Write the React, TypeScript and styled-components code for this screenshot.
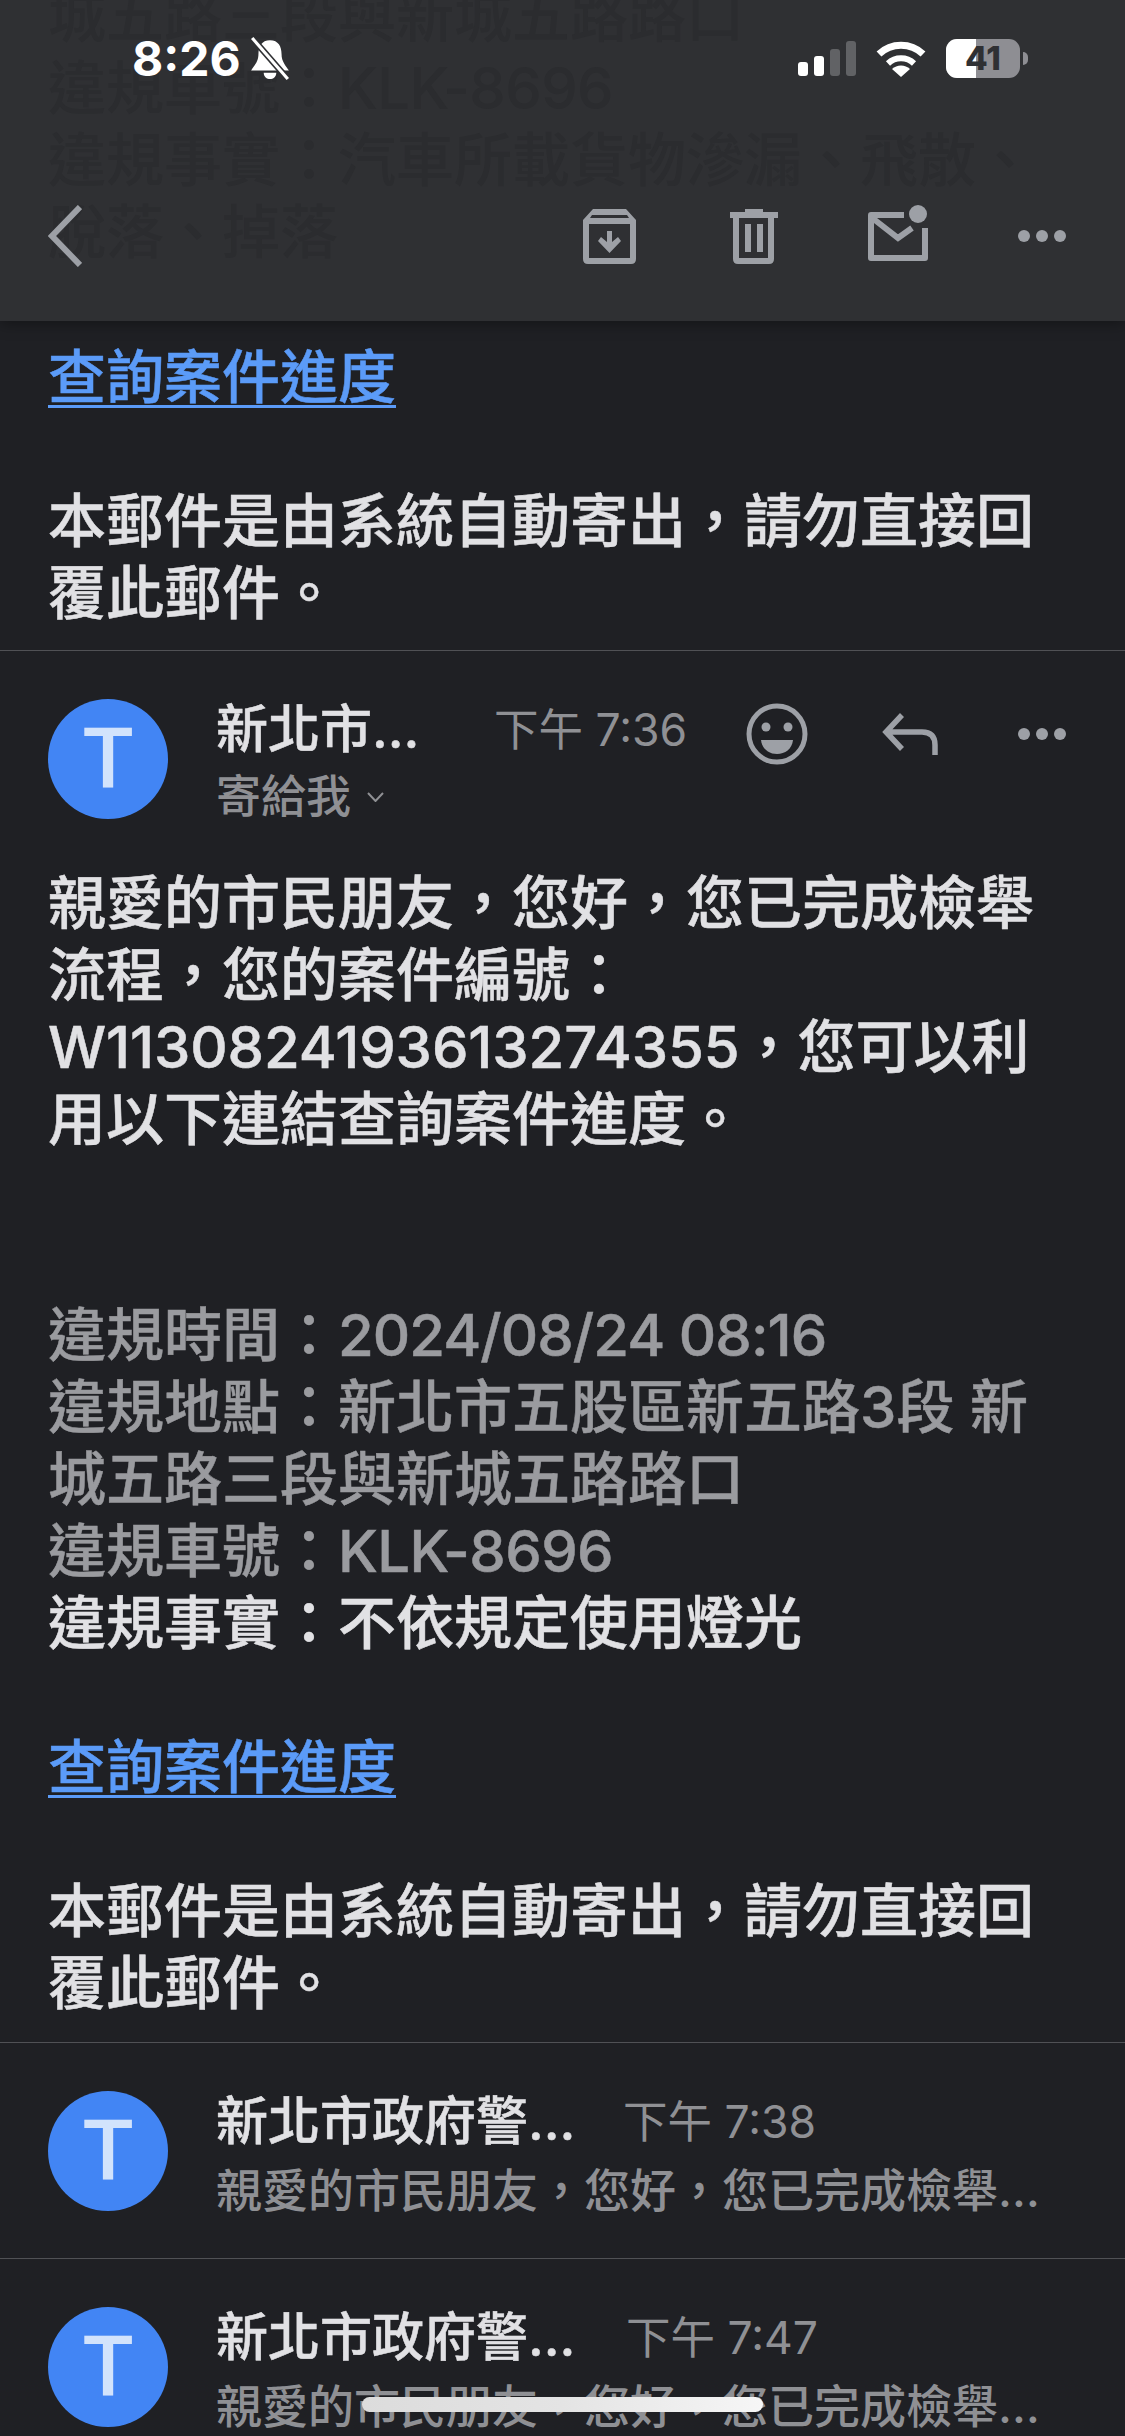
import styled, { createGlobalStyle } from 'styled-components'

const FONT = `Inter, 'Noto Sans CJK TC', sans-serif`
const ICON_GRAY = '#9da0a6'
const TEXT_WHITE = '#e1e1e4'
const TEXT_GRAY = '#9a9b9f'
const TEXT_MUTED = '#8f9094'

const GlobalStyle = createGlobalStyle`
  html, body {
    margin: 0;
    padding: 0;
    background: #1f2024;
  }
`

const BATTERY_LEVEL = 41

// full-width punctuation, kept as escapes so it survives copy and paste
const COMMA = '\uFF0C'
const COLON = '\uFF1A'

const AUTO_SENT_NOTICE = `本郵件是由系統自動寄出${COMMA}請勿直接回覆此郵件。`
const SNIPPET = `親愛的市民朋友${COMMA}您好${COMMA}您已完成檢舉流程${COMMA}您的案件編號${COLON}`

const ArchiveIcon = () => (
  <svg width="53" height="55" viewBox="0 0 53 55">
    <path
      fill={ICON_GRAY}
      fillRule="evenodd"
      d="M10 0H43L53 11V50Q53 55 48 55H5Q0 55 0 50V11ZM9 6L7 9H46L44 6ZM6 15V49H47V15Z"
    />
    <polygon fill={ICON_GRAY} points="24,22 29,22 29,33 35,28 38,32 26.5,44 15,32 18,28 24,33" />
  </svg>
)

const TrashIcon = () => (
  <svg width="48" height="55" viewBox="0 0 48 55">
    <path
      fill={ICON_GRAY}
      fillRule="evenodd"
      d="M15 0H33V3H48V9H44V50Q44 55 39 55H8Q3 55 3 50V9H0V3H15ZM9 9V49H38V9Z"
    />
    <rect x="15" y="15" width="6" height="28" fill={ICON_GRAY} />
    <rect x="27" y="15" width="6" height="28" fill={ICON_GRAY} />
  </svg>
)

const MailIcon = () => (
  <svg width="60" height="56" viewBox="0 0 60 56">
    <path
      d="M36 10H3V53H57V23"
      fill="none"
      stroke={ICON_GRAY}
      strokeWidth="6"
      strokeLinejoin="round"
    />
    <path d="M3 12L30 33L44 23" fill="none" stroke={ICON_GRAY} strokeWidth="6" />
    <circle cx="50" cy="9" r="9" fill={ICON_GRAY} />
  </svg>
)

const DotsIcon = () => (
  <svg width="48" height="12" viewBox="0 0 48 12">
    <circle cx="6" cy="6" r="6" fill={ICON_GRAY} />
    <circle cx="24" cy="6" r="6" fill={ICON_GRAY} />
    <circle cx="42" cy="6" r="6" fill={ICON_GRAY} />
  </svg>
)

const BackIcon = () => (
  <svg width="34" height="62" viewBox="0 0 34 62">
    <path d="M32 2L4 31L32 60" fill="none" stroke={ICON_GRAY} strokeWidth="6" />
  </svg>
)

const SmileIcon = () => (
  <svg width="62" height="62" viewBox="0 0 62 62">
    <circle cx="31" cy="31" r="28" fill="none" stroke={ICON_GRAY} strokeWidth="5" />
    <circle cx="20" cy="24" r="4.5" fill={ICON_GRAY} />
    <circle cx="42" cy="24" r="4.5" fill={ICON_GRAY} />
    <path d="M15 37H47C46 46 39 51 31 51C23 51 16 46 15 37Z" fill={ICON_GRAY} />
  </svg>
)

const ReplyIcon = () => (
  <svg width="56" height="42" viewBox="0 0 56 42">
    <path
      d="M20 2L4 19L20 36M4 19H40Q53 19 53 32V42"
      fill="none"
      stroke={ICON_GRAY}
      strokeWidth="5.5"
    />
  </svg>
)

const BellOffIcon = () => (
  <svg width="40" height="43" viewBox="0 0 38 41">
    <path d="M19 3C27 3 30 9 30 16C30 24 34 27 37 32H1C4 27 8 24 8 16C8 9 11 3 19 3Z" fill="#fff" />
    <path d="M13 34H25C25 38 22 40 19 40C16 40 13 38 13 34Z" fill="#fff" />
    <line x1="2" y1="1" x2="36" y2="40" stroke="#2f3033" strokeWidth="6" />
    <line x1="2" y1="1" x2="36" y2="40" stroke="#fff" strokeWidth="3" />
  </svg>
)

const WifiIcon = () => (
  <svg width="50" height="37" viewBox="0 0 50 37">
    <path d="M3 14A32 32 0 0 1 47 14" fill="none" stroke="#fff" strokeWidth="7" />
    <path d="M12 23.500A19 19 0 0 1 38 23.500" fill="none" stroke="#fff" strokeWidth="6" />
    <path d="M25 37L16 29A13 13 0 0 1 34 29Z" fill="#fff" />
  </svg>
)

const ChevronIcon = () => (
  <svg width="17" height="10" viewBox="0 0 17 10">
    <path d="M1 1L8.500 9L16 1" fill="none" stroke={TEXT_MUTED} strokeWidth="2" />
  </svg>
)

const Avatar = () => <AvatarCircle>T</AvatarCircle>

export default function App() {
  return (
    <Screen>
      <GlobalStyle />
      <TopBar>
        <GhostText aria-hidden>
          城五路三段與新城五路路口
          <br />
          違規車號{COLON}<Latin $spacing={-0.6}>KLK-8696</Latin>
          <br />
          違規事實{COLON}汽車所載貨物滲漏、飛散、
          <br />
          脫落、掉落
        </GhostText>
        <StatusBar>
          <Clock>8:26</Clock>
          <BellSlot>
            <BellOffIcon />
          </BellSlot>
          <StatusRight>
            <Signal>
              <SignalBar $height={14} $on />
              <SignalBar $height={20} $on />
              <SignalBar $height={27} />
              <SignalBar $height={35} />
            </Signal>
            <WifiIcon />
            <Battery>
              <BatteryFill style={{ width: `${BATTERY_LEVEL}%` }} />
              <BatteryLabel>{BATTERY_LEVEL}</BatteryLabel>
              <BatteryNub />
            </Battery>
          </StatusRight>
        </StatusBar>
        <Toolbar>
          <BackIcon />
          <ToolbarActions>
            <ArchiveSlot>
              <ArchiveIcon />
            </ArchiveSlot>
            <TrashIcon />
            <MailSlot>
              <MailIcon />
            </MailSlot>
            <DotsIcon />
          </ToolbarActions>
        </Toolbar>
      </TopBar>

      <PreviousMessageEnd>
        <Paragraph>
          <BodyLink href="#">查詢案件進度</BodyLink>
        </Paragraph>
        <BlankLine />
        <Paragraph>{AUTO_SENT_NOTICE}</Paragraph>
      </PreviousMessageEnd>

      <Message>
        <MessageHeader>
          <Avatar />
          <Meta>
            <NameRow>
              <SenderName $width={208}>新北市政府警察局</SenderName>
              <SentTime $gap={70}>下午 7:36</SentTime>
            </NameRow>
            <Recipient>
              寄給我
              <ChevronIcon />
            </Recipient>
          </Meta>
          <HeaderActions>
            <SmileIcon />
            <ReplyIcon />
            <DotsIcon />
          </HeaderActions>
        </MessageHeader>

        <MessageBody>
          <Paragraph>
            親愛的市民朋友{COMMA}您好{COMMA}您已完成檢舉流程{COMMA}您的案件編號{COLON}
            <Latin $spacing={-0.1}>W1130824193613274355</Latin>
            {COMMA}您可以利用以下連結查詢案件進度。
          </Paragraph>
          <BlankLine />
          <BlankLine />
          <Paragraph $muted>
            違規時間{COLON}<Latin $spacing={-0.95}>2024/08/24 08:16</Latin>
            <br />
            違規地點{COLON}新北市五股區新五路<Latin $spacing={0}>3</Latin>段 新城五路三段與新城五路路口
            <br />
            違規車號{COLON}<Latin $spacing={-0.6}>KLK-8696</Latin>
          </Paragraph>
          <Paragraph>違規事實{COLON}不依規定使用燈光</Paragraph>
          <BlankLine />
          <Paragraph>
            <BodyLink href="#">查詢案件進度</BodyLink>
          </Paragraph>
          <BlankLine />
          <Paragraph>{AUTO_SENT_NOTICE}</Paragraph>
        </MessageBody>
      </Message>

      <CollapsedRow>
        <Avatar />
        <Meta>
          <NameRow>
            <SenderName $width={364}>新北市政府警察局交通警察大隊</SenderName>
            <SentTime $gap={43}>下午 7:38</SentTime>
          </NameRow>
          <Snippet>{SNIPPET}</Snippet>
        </Meta>
      </CollapsedRow>
      <CollapsedRow>
        <Avatar />
        <Meta>
          <NameRow>
            <SenderName $width={364}>新北市政府警察局交通警察大隊</SenderName>
            <SentTime $gap={46}>下午 7:47</SentTime>
          </NameRow>
          <Snippet>{SNIPPET}</Snippet>
        </Meta>
      </CollapsedRow>

      <HomeIndicator />
    </Screen>
  )
}

const Screen = styled.div`
  position: relative;
  width: 1125px;
  height: 2436px;
  overflow: hidden;
  background: #1f2024;
  color: ${TEXT_WHITE};
  font-family: ${FONT};
`

const TopBar = styled.header`
  position: relative;
  height: 321px;
  overflow: hidden;
  background: #2f3033;
  box-shadow: 0 3px 14px rgba(0, 0, 0, 0.35);
`

const GhostText = styled.div`
  position: absolute;
  top: -20px;
  left: 48px;
  width: 1040px;
  font-size: 58px;
  font-weight: 500;
  line-height: 72px;
  color: #2b2c2f;
  white-space: nowrap;
`

const StatusBar = styled.div`
  position: relative;
  display: flex;
  align-items: center;
  height: 195px;
  padding: 0 97px 78px 132px;
  box-sizing: border-box;
`

const Clock = styled.span`
  font-size: 48px;
  font-weight: 700;
  line-height: 41px;
  color: #fff;
`

const BellSlot = styled.span`
  display: flex;
  margin-left: 9px;
`

const StatusRight = styled.div`
  display: flex;
  align-items: center;
  gap: 20px;
  margin-left: auto;
`

const Signal = styled.div`
  display: flex;
  align-items: flex-end;
  gap: 6px;
  height: 35px;
`

const SignalBar = styled.span<{ $height: number; $on?: boolean }>`
  width: 10px;
  height: ${({ $height }) => $height}px;
  border-radius: 3px;
  background: ${({ $on }) => ($on ? '#fff' : '#616265')};
`

const Battery = styled.div`
  position: relative;
  width: 74px;
  height: 39px;
  margin-right: 8px;
  border-radius: 11px;
  background: #8e8e93;
`

const BatteryFill = styled.div`
  position: absolute;
  top: 0;
  bottom: 0;
  left: 0;
  border-radius: 11px 0 0 11px;
  background: #fff;
`

const BatteryLabel = styled.span`
  position: absolute;
  inset: 0;
  text-align: center;
  font-size: 33px;
  font-weight: 800;
  line-height: 39px;
  color: #2f3033;
`

const BatteryNub = styled.span`
  position: absolute;
  top: 13px;
  right: -8px;
  width: 5px;
  height: 13px;
  border-radius: 0 6px 6px 0;
  background: #8e8e93;
`

const Toolbar = styled.div`
  position: relative;
  display: flex;
  align-items: center;
  height: 82px;
  padding: 0 59px 0 48px;
`

const ToolbarActions = styled.div`
  display: flex;
  align-items: center;
  gap: 90px;
  margin-left: auto;
`

const ArchiveSlot = styled.span`
  display: flex;
  margin-right: 4px;
`

const MailSlot = styled.span`
  display: flex;
  margin-bottom: 6px;
`

const PreviousMessageEnd = styled.section`
  padding: 20px 48px 21px;
`

const Paragraph = styled.p<{ $muted?: boolean }>`
  margin: 0;
  font-size: 58px;
  font-weight: 500;
  line-height: 72px;
  color: ${({ $muted }) => ($muted ? TEXT_GRAY : TEXT_WHITE)};
  -webkit-text-stroke: 0.5px currentColor;
`

const BlankLine = styled.div`
  height: 72px;
`

const Latin = styled.span<{ $spacing: number }>`
  letter-spacing: ${({ $spacing }) => $spacing}px;
`

const BodyLink = styled.a`
  color: #5b9bf8;
  text-decoration: underline;
  text-decoration-thickness: 3px;
  text-underline-offset: 7px;
`

const Message = styled.article`
  border-top: 1px solid #505155;
  padding: 48px 48px 23px;
`

const MessageHeader = styled.div`
  display: flex;
  height: 120px;
  margin-bottom: 48px;
`

const AvatarCircle = styled.div`
  flex: none;
  width: 120px;
  height: 120px;
  margin-right: 48px;
  border-radius: 50%;
  background: #4285f4;
  color: #d2e3fc;
  font-family: Roboto, sans-serif;
  font-size: 84px;
  font-weight: 500;
  line-height: 120px;
  text-align: center;
`

const Meta = styled.div`
  min-width: 0;
`

const NameRow = styled.div`
  display: flex;
  align-items: center;
  height: 62px;
`

const SenderName = styled.div<{ $width: number }>`
  width: ${({ $width }) => $width}px;
  overflow: hidden;
  font-size: 52px;
  font-weight: 500;
  line-height: 62px;
  color: ${TEXT_WHITE};
  text-overflow: ellipsis;
  white-space: nowrap;
  -webkit-text-stroke: 0.5px currentColor;
`

const SentTime = styled.span<{ $gap: number }>`
  margin-left: ${({ $gap }) => $gap}px;
  font-size: 44.5px;
  line-height: 62px;
  color: ${TEXT_MUTED};
  white-space: nowrap;
`

const Recipient = styled.div`
  display: flex;
  align-items: center;
  gap: 16px;
  margin-top: 10px;
  font-size: 45px;
  font-weight: 500;
  line-height: 52px;
  color: ${TEXT_MUTED};
`

const HeaderActions = styled.div`
  display: flex;
  align-items: center;
  gap: 74px;
  height: 62px;
  margin: 4px 11px 0 auto;

  & > svg:nth-child(2) {
    margin-right: 6px;
  }
`

const MessageBody = styled.div``

const CollapsedRow = styled.div`
  display: flex;
  height: 120px;
  padding: 48px 48px 47px;
  border-top: 1px solid #505155;
`

const Snippet = styled.div`
  width: 836px;
  margin-top: 11px;
  overflow: hidden;
  font-size: 46px;
  font-weight: 500;
  line-height: 52px;
  color: ${TEXT_MUTED};
  text-overflow: ellipsis;
  white-space: nowrap;
`

const HomeIndicator = styled.div`
  position: absolute;
  top: 2397px;
  left: 362px;
  width: 401px;
  height: 15px;
  border-radius: 8px;
  background: linear-gradient(90deg, #dcdcdc, #e4e4e4 50%, #f6f6f6);
`
